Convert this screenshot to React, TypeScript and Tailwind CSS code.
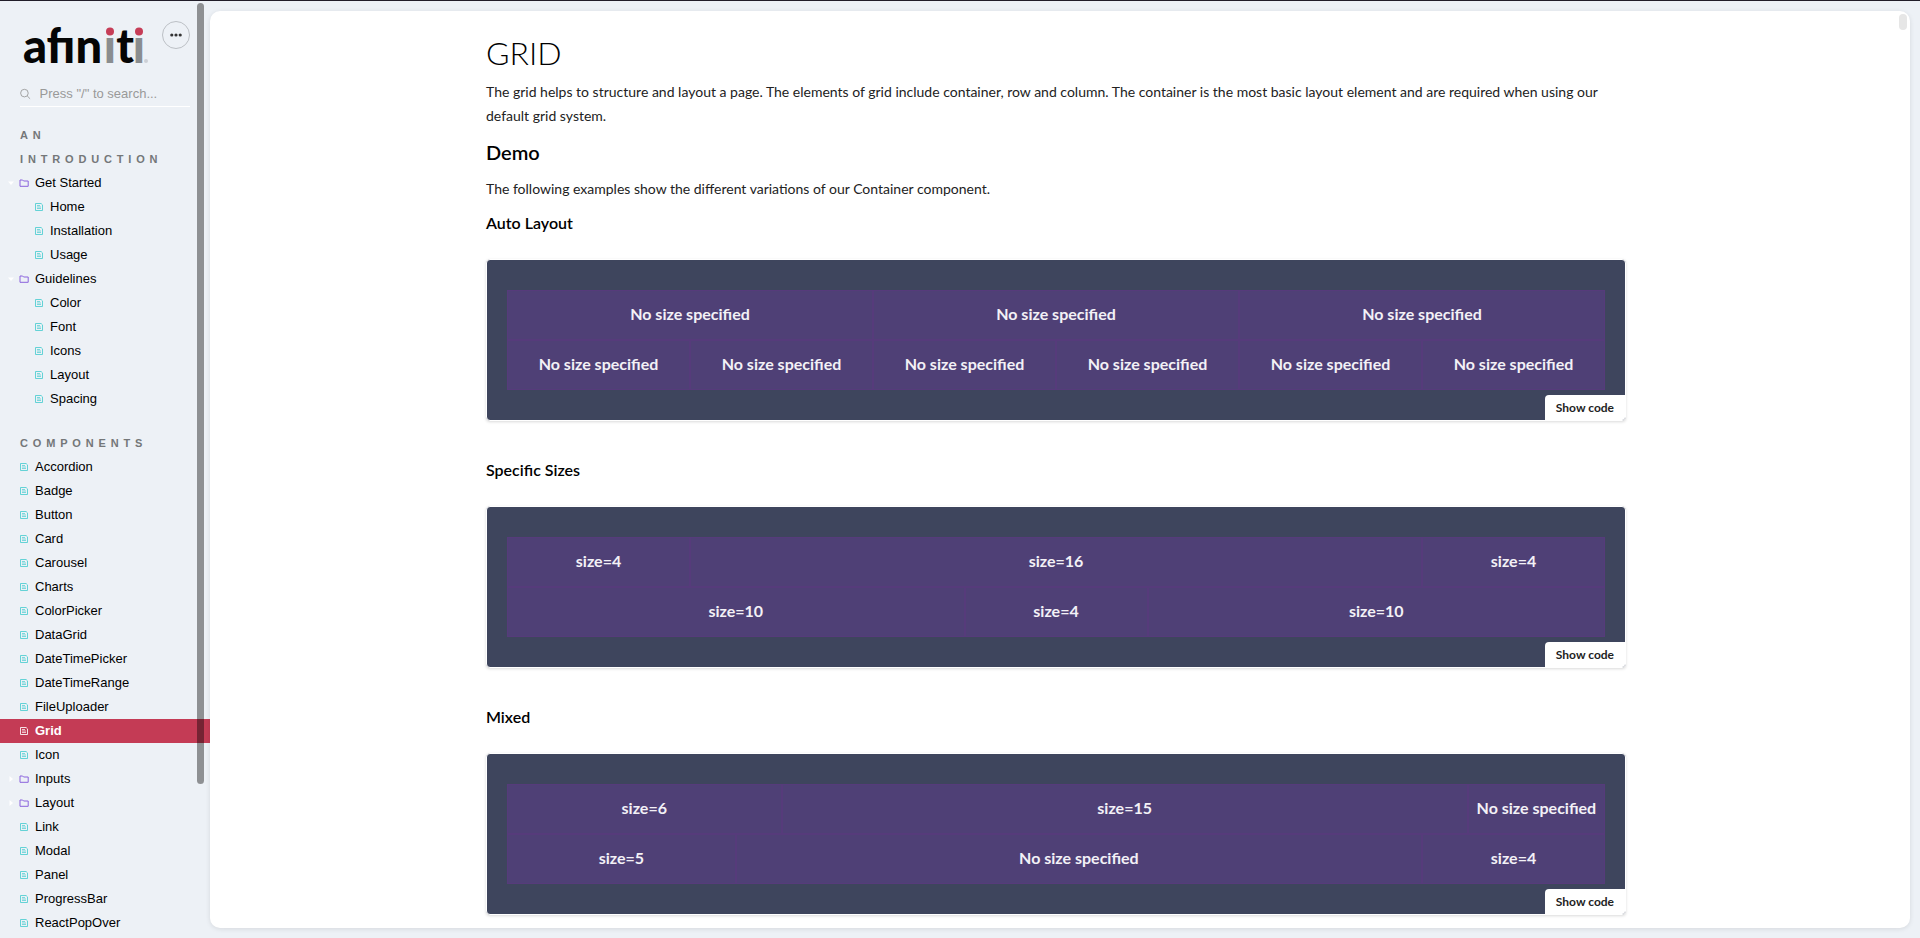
import React from "react";

type Node = { label: string; kind: "doc" | "open" | "closed"; child?: boolean; active?: boolean };
type Cell = { label: string; span: string };

const doc = (label: string, child = false): Node => ({ label, kind: "doc", child });

const intro: Node[] = [
  { label: "Get Started", kind: "open" },
  doc("Home", true),
  doc("Installation", true),
  doc("Usage", true),
  { label: "Guidelines", kind: "open" },
  doc("Color", true),
  doc("Font", true),
  doc("Icons", true),
  doc("Layout", true),
  doc("Spacing", true),
];

const components: Node[] = [
  doc("Accordion"),
  doc("Badge"),
  doc("Button"),
  doc("Card"),
  doc("Carousel"),
  doc("Charts"),
  doc("ColorPicker"),
  doc("DataGrid"),
  doc("DateTimePicker"),
  doc("DateTimeRange"),
  doc("FileUploader"),
  { label: "Grid", kind: "doc", active: true },
  doc("Icon"),
  { label: "Inputs", kind: "closed" },
  { label: "Layout", kind: "closed" },
  doc("Link"),
  doc("Modal"),
  doc("Panel"),
  doc("ProgressBar"),
  doc("ReactPopOver"),
];

const none = "No size specified";

const demos: { title: string; rows: Cell[][] }[] = [
  {
    title: "Auto Layout",
    rows: [
      Array.from({ length: 3 }, () => ({ label: none, span: "col-span-8" })),
      Array.from({ length: 6 }, () => ({ label: none, span: "col-span-4" })),
    ],
  },
  {
    title: "Specific Sizes",
    rows: [
      [
        { label: "size=4", span: "col-span-4" },
        { label: "size=16", span: "col-span-16" },
        { label: "size=4", span: "col-span-4" },
      ],
      [
        { label: "size=10", span: "col-span-10" },
        { label: "size=4", span: "col-span-4" },
        { label: "size=10", span: "col-span-10" },
      ],
    ],
  },
  {
    title: "Mixed",
    rows: [
      [
        { label: "size=6", span: "col-span-6" },
        { label: "size=15", span: "col-span-15" },
        { label: none, span: "col-span-3" },
      ],
      [
        { label: "size=5", span: "col-span-5" },
        { label: none, span: "col-span-15" },
        { label: "size=4", span: "col-span-4" },
      ],
    ],
  },
];

function Logo() {
  return (
    <svg width="130" height="66" viewBox="-2 0 130 66" role="img" aria-label="afiniti" className="block">
      <g fontFamily="Lato, sans-serif" fontWeight="900" fontSize="47">
        <text x="-1" y="54" fill="#050505">afın</text>
        <text x="86" y="54" textAnchor="middle" fill="#8a8d8f">ı</text>
        <text x="101" y="54" textAnchor="middle" fill="#050505">t</text>
        <text x="115" y="54" textAnchor="middle" fill="#8a8d8f">ı</text>
      </g>
      <circle cx="86" cy="22.5" r="4" fill="#c63d57" />
      <circle cx="115" cy="22.5" r="4" fill="#c63d57" />
      <circle cx="122" cy="52" r="2" fill="#cdd0d6" />
    </svg>
  );
}

function DocIcon() {
  return (
    <svg width="8" height="8" viewBox="0 0 8 8" fill="none" stroke="currentColor" aria-hidden="true">
      <path d="M.5.5h5.6l1.4 1.4v5.6h-7z" strokeOpacity=".85" />
      <path d="M2 2.5h3M2 4h4M2 5.5h4" strokeWidth=".7" />
    </svg>
  );
}

function FolderIcon() {
  return (
    <svg width="10" height="8" viewBox="0 0 10 8" fill="none" stroke="currentColor" aria-hidden="true">
      <path d="M1 7.3V1h2.6l1 1h4.6v5.3z" />
    </svg>
  );
}

function NavRow({ node }: { node: Node }) {
  const active = node.active === true;
  return (
    <li>
      <a
        href={`#${node.label}`}
        aria-current={active ? "page" : undefined}
        className={`flex h-6 items-center text-[13px] leading-6 ${node.child ? "pl-[35px]" : node.kind === "doc" ? "pl-5" : "pl-2"} ${
          active ? "bg-[#c43b55] font-bold text-white" : "text-black"
        }`}
      >
        {node.kind !== "doc" && (
          <span className="flex w-[11px] text-white">
            <svg width="6" height="6" viewBox="0 0 6 6" fill="currentColor" aria-hidden="true">
              <path d={node.kind === "open" ? "M0 1.5h6L3 5z" : "M1.5 0v6L5 3z"} />
            </svg>
          </span>
        )}
        <span className={`flex ${node.kind === "doc" ? `w-[15px] ${active ? "text-white" : "text-[#4bccd0]"}` : "w-4 text-[#8a63dd]"}`}>
          {node.kind === "doc" ? <DocIcon /> : <FolderIcon />}
        </span>
        {node.label}
      </a>
    </li>
  );
}

function NavGroup({ title, nodes }: { title: string; nodes: Node[] }) {
  return (
    <section className="mb-5">
      <h2 className="pr-10 pl-5 text-[11px] leading-6 font-black tracking-[0.44em] text-[#747779] uppercase">{title}</h2>
      <ul>
        {nodes.map((n) => (
          <NavRow key={n.label} node={n} />
        ))}
      </ul>
    </section>
  );
}

function Preview({ rows }: { rows: Cell[][] }) {
  return (
    <div className="relative mt-6 mb-[27px] overflow-hidden rounded border border-white bg-[#3e455d] px-5 py-[30px] shadow-[0_1px_3px_rgba(0,0,0,0.15)]">
      {rows.map((row, i) => (
        <div key={i} className="grid grid-cols-24">
          {row.map((cell, j) => (
            <div
              key={j}
              className={`${cell.span} flex h-[50px] items-center justify-center border border-[#563b7b] bg-[#4f4076] pb-0.5 text-base font-bold whitespace-nowrap text-[#f3f1f6]`}
            >
              {cell.label}
            </div>
          ))}
        </div>
      ))}
      <button type="button" className="absolute right-0 bottom-0 rounded-tl bg-white px-[11px] text-xs leading-[25px] font-bold text-[#222]">
        Show code
      </button>
    </div>
  );
}

export default function App() {
  return (
    <div className="flex h-screen overflow-hidden border-t border-[#211d29] bg-[#edf1f6] font-['Liberation_Sans',Arial,sans-serif]">
      <aside className="relative w-[210px] shrink-0 overflow-hidden">
        <header className="flex items-start justify-between pt-2 pr-5 pl-[22px]">
          <Logo />
          <button type="button" aria-label="Menu" className="mt-3 flex size-7 shrink-0 items-center justify-center rounded-full border border-[#bcc0c5]">
            <svg width="12" height="4" viewBox="0 0 12 4" fill="#333" aria-hidden="true">
              <circle cx="1.8" cy="2" r="1.6" />
              <circle cx="6" cy="2" r="1.6" />
              <circle cx="10.2" cy="2" r="1.6" />
            </svg>
          </button>
        </header>
        <label className="mx-5 mt-1 mb-4 flex h-7 items-center gap-[9px] border-b border-white pt-0.5 text-[#999]">
          <svg width="12" height="12" viewBox="0 0 12 12" fill="none" stroke="currentColor" aria-hidden="true">
            <circle cx="5" cy="5" r="4.3" />
            <path d="M8.2 8.2l3.2 3.2" />
          </svg>
          <input aria-label="Search" placeholder={'Press "/" to search...'} className="w-full min-w-0 bg-transparent text-[13px] outline-none placeholder:text-[#999]" />
        </label>
        <nav>
          <NavGroup title="An Introduction" nodes={intro} />
          <NavGroup title="Components" nodes={components} />
        </nav>
        <div className="absolute top-[2px] right-[6px] h-[83.4%] w-[7px] rounded-full bg-black/40" />
      </aside>
      <main className="relative my-[10px] mr-[10px] flex-1 overflow-hidden rounded-[10px] bg-white pr-2 font-['Lato',sans-serif] shadow-[0_1px_5px_rgba(0,0,0,0.1)]">
        <div className="mx-auto max-w-[1140px] pt-[22px] text-[#222]">
          <h1 className="text-[32px] leading-10 font-light text-black">GRID</h1>
          <p className="mt-[7px] text-sm leading-6">
            The grid helps to structure and layout a page. The elements of grid include container, row and column. The container is the most basic
            layout element and are required when using our default grid system.
          </p>
          <h2 className="mt-3 text-xl leading-6 font-semibold text-black">Demo</h2>
          <p className="mt-[13px] text-sm leading-6">The following examples show the different variations of our Container component.</p>
          {demos.map((d) => (
            <section key={d.title} className="pt-[10px]">
              <h3 className="text-base leading-6 font-semibold text-black">{d.title}</h3>
              <Preview rows={d.rows} />
            </section>
          ))}
        </div>
        <div className="absolute top-[3px] right-[3px] h-4 w-2 rounded-full bg-[#e6e6e6]" />
      </main>
    </div>
  );
}
